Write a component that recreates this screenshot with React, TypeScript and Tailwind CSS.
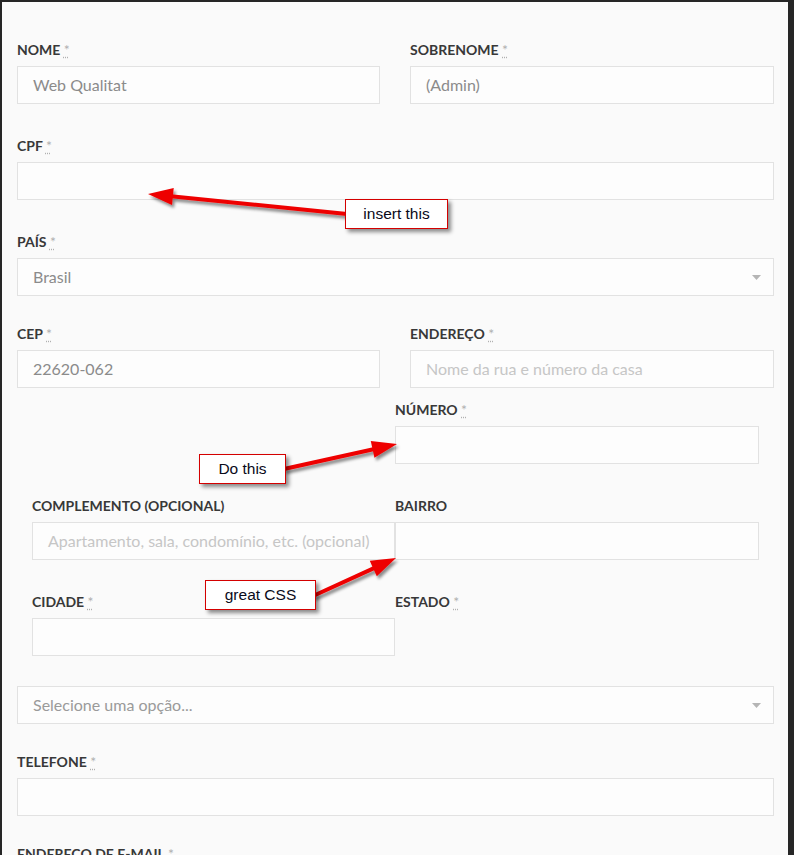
import React from "react";

const lato = { fontFamily: "Lato, 'Open Sans', sans-serif" };

function Label({ text, required = true }: { text: string; required?: boolean }) {
  return (
    <div className="h-4 mb-2 text-[14px] leading-4 font-bold text-[#383838] whitespace-nowrap">
      {text}
      {required && (
        <>
          {" "}
          <abbr className="text-[#b0b0b0] font-normal underline decoration-dotted underline-offset-2">
            *
          </abbr>
        </>
      )}
    </div>
  );
}

function Input({ value, placeholder }: { value?: string; placeholder?: string }) {
  return (
    <div className="h-[38px] border border-[#e2e2e2] bg-[#fdfdfd] pl-[15px] flex items-center text-[16px]">
      {value ? (
        <span className="text-[#8b8b8b]">{value}</span>
      ) : (
        <span className="text-[#c6c6c6]">{placeholder}</span>
      )}
    </div>
  );
}

function Select({ value, muted }: { value: string; muted?: boolean }) {
  return (
    <div className="h-[38px] border border-[#e2e2e2] bg-[#fdfdfd] pl-[15px] pr-[12px] flex items-center justify-between text-[16px]">
      <span className={muted ? "text-[#9a9a9a]" : "text-[#8b8b8b]"}>{value}</span>
      <svg width="9" height="5" viewBox="0 0 9 5">
        <polygon points="0,0 9,0 4.5,5" fill="#b5b5b5" />
      </svg>
    </div>
  );
}

function Field({ label, required, value, placeholder }: { label: string; required?: boolean; value?: string; placeholder?: string }) {
  return (
    <div>
      <Label text={label} required={required} />
      <Input value={value} placeholder={placeholder} />
    </div>
  );
}

type Pt = [number, number];

function Arrow({ from, to }: { from: Pt; to: Pt }) {
  const dx = to[0] - from[0];
  const dy = to[1] - from[1];
  const len = Math.hypot(dx, dy);
  const ux = dx / len;
  const uy = dy / len;
  const headLen = 25;
  const headW = 8.5;
  const bx = to[0] - ux * headLen;
  const by = to[1] - uy * headLen;
  const px = -uy;
  const py = ux;
  const head = `${to[0]},${to[1]} ${bx + px * headW},${by + py * headW} ${bx - px * headW},${by - py * headW}`;
  return (
    <g filter="url(#shadow)">
      <line x1={from[0]} y1={from[1]} x2={bx + ux * 2} y2={by + uy * 2} stroke="#ee0000" strokeWidth="4" />
      <polygon points={head} fill="#ee0000" />
    </g>
  );
}

function Note({ text, className }: { text: string; className: string }) {
  return (
    <div
      className={`absolute h-[30px] border border-[#d40000] bg-white flex items-center justify-center text-[15.5px] text-[#0a0a1a] shadow-[3px_3px_4px_rgba(0,0,0,0.45)] ${className}`}
      style={{ fontFamily: "'Liberation Sans', Arial, sans-serif" }}
    >
      {text}
    </div>
  );
}

export default function App() {
  return (
    <div className="relative w-[794px] h-[855px] overflow-hidden bg-[#262626]" style={lato}>
      <div className="h-full ml-[2px] mr-[6px] mt-[2px] bg-[#fafafa] pl-[15px] pr-[14px] pt-[40px]">
        <div className="grid grid-cols-[363px_364px] gap-x-[30px]">
          <Field label="NOME" value="Web Qualitat" />
          <Field label="SOBRENOME" value="(Admin)" />
        </div>

        <div className="mt-[34px]">
          <Field label="CPF" />
        </div>

        <div className="mt-[34px]">
          <Label text="PAÍS" />
          <Select value="Brasil" />
        </div>

        <div className="mt-[30px] grid grid-cols-[363px_364px] gap-x-[30px]">
          <Field label="CEP" value="22620-062" />
          <Field label="ENDEREÇO" placeholder="Nome da rua e número da casa" />
        </div>

        <div className="ml-[15px] w-[727px]">
          <div className="mt-[14px] grid grid-cols-[363px_364px]">
            <div />
            <Field label="NÚMERO" />
          </div>
          <div className="mt-[34px] grid grid-cols-[363px_364px]">
            <Field label="COMPLEMENTO (OPCIONAL)" required={false} placeholder="Apartamento, sala, condomínio, etc. (opcional)" />
            <Field label="BAIRRO" required={false} />
          </div>
          <div className="mt-[34px] grid grid-cols-[363px_364px]">
            <Field label="CIDADE" />
            <Label text="ESTADO" />
          </div>
        </div>

        <div className="mt-[30px]">
          <Select value="Selecione uma opção..." muted />
        </div>

        <div className="mt-[30px]">
          <Field label="TELEFONE" />
        </div>

        <div className="mt-[30px]">
          <Label text="ENDEREÇO DE E-MAIL" />
        </div>
      </div>

      <svg className="absolute inset-0 pointer-events-none" width="794" height="855">
        <defs>
          <filter id="shadow" x="-20%" y="-50%" width="140%" height="200%">
            <feDropShadow dx="2" dy="3" stdDeviation="1.5" floodColor="#000" floodOpacity="0.45" />
          </filter>
        </defs>
        <Arrow from={[347, 214]} to={[148, 194]} />
        <Arrow from={[284, 469]} to={[397, 444]} />
        <Arrow from={[313, 596]} to={[396, 558]} />
      </svg>

      <Note text="insert this" className="left-[345px] top-[199px] w-[103px]" />
      <Note text="Do this" className="left-[199px] top-[454px] w-[87px]" />
      <Note text="great CSS" className="left-[205px] top-[580px] w-[111px]" />
    </div>
  );
}
